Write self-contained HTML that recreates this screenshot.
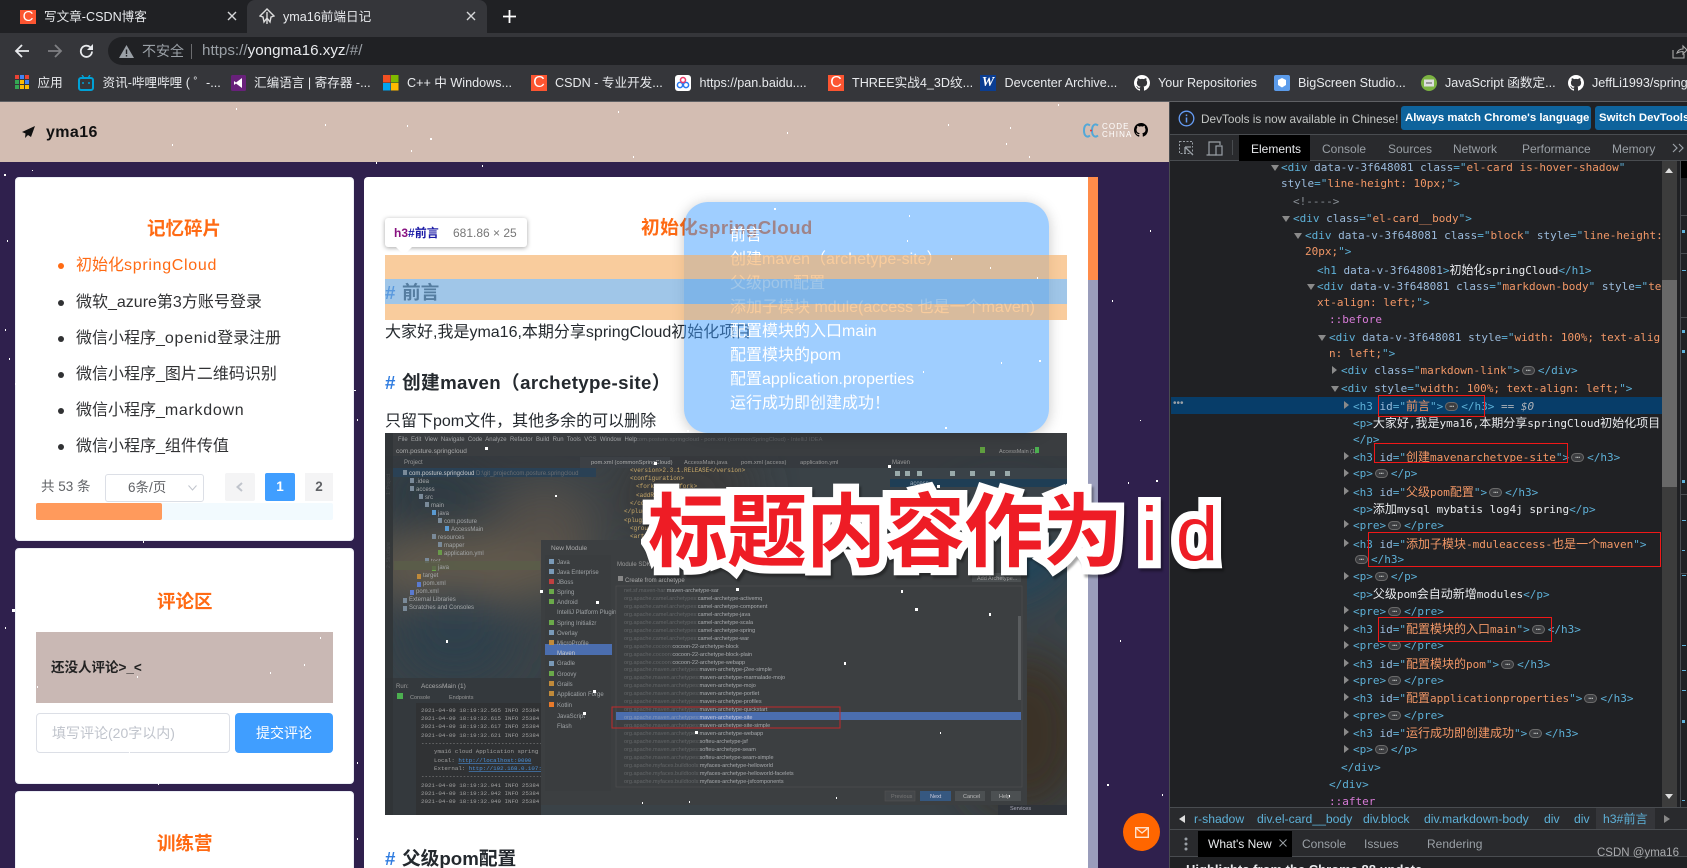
<!DOCTYPE html>
<html lang="zh"><head><meta charset="utf-8"><title>yma16前端日记</title>
<style>
*{box-sizing:border-box}
html,body{margin:0;padding:0;width:1687px;height:868px;overflow:hidden;background:#2f204d;font-family:"Liberation Sans","Noto Sans CJK SC",sans-serif}
#w{position:relative;width:1687px;height:868px;overflow:hidden;background:#2f204d}
.x{position:absolute;white-space:pre}
.bk{position:absolute;top:74px;font-size:12.6px;line-height:18px;color:#e8eaed;white-space:pre}
.bi{position:absolute;top:75px;width:16px;height:16px}
.li{position:absolute;left:76px;font-size:16px;line-height:22px;color:#303133;white-space:pre}
.li span{letter-spacing:.7px}
.dot{position:absolute;left:58px;width:6px;height:6px;border-radius:50%;background:#303133}
.card{position:absolute;left:15px;width:339px;background:#fff;border-radius:4px;border:1px solid #ebeef5}
.ttl{position:absolute;font-size:18.5px;line-height:24px;font-weight:700;color:#ff6a13;white-space:pre}
.toc{position:absolute;left:730px;font-size:16px;line-height:22px;color:#fff;white-space:pre}
.dt{position:absolute;font-size:12px;line-height:16px;color:#9aa0a6;white-space:pre}
.l{position:absolute;font:11px/16px "DejaVu Sans Mono","Noto Sans CJK SC",monospace;color:#5db0d7;white-space:pre}
.l i{font-style:normal;font-size:12px;font-family:"Noto Sans CJK SC",sans-serif}
.l u{text-decoration:none;color:#9bbbdc}
.l s{text-decoration:none;color:#f29766}
.l em{font-style:normal;color:#e8eaed}
.l b{font-weight:400;color:#d77bd7}
.l span{display:inline-block;width:13px;height:9px;border-radius:5px;background:#3c3d40;border:1px solid #6b6b6b;margin:0 3px 0 2px;vertical-align:-1px;font-size:8px;line-height:4px;text-align:center;color:#c4c7c5;overflow:hidden}
.tr{position:absolute;width:0;height:0;border-left:5px solid #8a8a8a;border-top:4px solid transparent;border-bottom:4px solid transparent}
.td{position:absolute;width:0;height:0;border-top:6px solid #8a8a8a;border-left:4px solid transparent;border-right:4px solid transparent}
.rb{position:absolute;border:1px solid #f01818}
.cr{position:absolute;font-size:12.2px;line-height:16px;color:#5db0d7;white-space:pre}
.big{position:absolute;left:648px;top:478px;font:700 80px/96px "Noto Sans CJK SC","Liberation Sans",sans-serif;color:#ee1c25;-webkit-text-stroke:16px #fff;paint-order:stroke fill;letter-spacing:-1px;white-space:pre;filter:drop-shadow(2px 3px 1px rgba(0,0,0,.35));stroke-linejoin:round}
.big span{font-family:"Liberation Sans",sans-serif;font-size:76px;letter-spacing:18px;font-weight:400;margin-left:19px}
</style></head><body><div id="w">

<!-- browser chrome -->
<div class="x" style="left:0;top:0;width:1687px;height:102px;background:#35363a"></div>
<div class="x" style="left:0;top:0;width:1687px;height:33px;background:#202124"></div>
<div class="x" style="left:247px;top:0;width:240px;height:37px;background:#35363a;border-radius:8px 8px 0 0"></div>
<div class="x" style="left:20px;top:10px;width:16px;height:14px;background:#fc5531;color:#fff;font-size:15px;line-height:14px;text-align:center">C</div>
<div class="x" style="left:44px;top:8px;font-size:12.6px;line-height:18px;color:#e8eaed">写文章-CSDN博客</div>
<svg class="x" style="left:227px;top:11px" width="10" height="10"><path d="M1 1l8 8M9 1l-8 8" stroke="#d5d6d8" stroke-width="1.4"/></svg>
<svg class="x" style="left:259px;top:8px" width="16" height="17" viewBox="0 0 16 17"><path d="M8 1L1 8l3 1 1 5 3-4 3 4 1-5 3-1zM8 4v12" fill="none" stroke="#ddd" stroke-width="1.4"/></svg>
<div class="x" style="left:283px;top:8px;font-size:12.6px;line-height:18px;color:#e8eaed">yma16前端日记</div>
<svg class="x" style="left:466px;top:11px" width="10" height="10"><path d="M1 1l8 8M9 1l-8 8" stroke="#d5d6d8" stroke-width="1.4"/></svg>
<svg class="x" style="left:503px;top:10px" width="13" height="13"><path d="M6.500 0v13M0 6.500h13" stroke="#fff" stroke-width="1.8"/></svg>
<!-- toolbar -->
<svg class="x" style="left:14px;top:44px" width="16" height="14"><path d="M15 7H2M8 1L2 7l6 6" fill="none" stroke="#e8eaed" stroke-width="1.8"/></svg>
<svg class="x" style="left:47px;top:44px" width="16" height="14"><path d="M1 7h13M8 1l6 6-6 6" fill="none" stroke="#7f8083" stroke-width="1.8"/></svg>
<svg class="x" style="left:79px;top:44px" width="15" height="15"><path d="M13 7.500A5.600 5.600 0 1 1 11 3" fill="none" stroke="#e8eaed" stroke-width="1.8"/><path d="M14 0v6H8z" fill="#e8eaed"/></svg>
<div class="x" style="left:108px;top:37px;width:1579px;height:28px;background:#202124;border-radius:14px 0 0 14px"></div>
<svg class="x" style="left:119px;top:45px" width="15" height="13"><path d="M7.500 0L15 13H0z" fill="#9aa0a6"/><path d="M7.500 4.500v4.500M7.500 10v1.500" stroke="#202124" stroke-width="1.4"/></svg>
<div class="x" style="left:142px;top:42px;font-size:14px;line-height:18px;color:#9aa0a6">不安全</div>
<div class="x" style="left:191px;top:44px;width:1px;height:15px;background:#6b6c6f"></div>
<div class="x" style="left:202px;top:42px;font-size:15.2px;line-height:18px;color:#9aa0a6">https://<span style="color:#e8eaed">yongma16.xyz</span>/#/</div>
<svg class="x" style="left:1672px;top:44px" width="15" height="15"><path d="M1 6v8h11v-4M5 9c1-3 3-4 6-4V2l4 4-4 4V7.500c-2 0-4 .5-6 1.500z" fill="none" stroke="#aaa" stroke-width="1.1"/></svg>
<!-- bookmarks -->
<svg class="x" style="left:15px;top:75px" width="15" height="15"><g><rect width="4" height="4" fill="#ea4335"/><rect x="5" width="4" height="4" fill="#4285f4"/><rect x="10" width="4" height="4" fill="#ea4335"/><rect y="5" width="4" height="4" fill="#34a853"/><rect x="5" y="5" width="4" height="4" fill="#fbbc04"/><rect x="10" y="5" width="4" height="4" fill="#4285f4"/><rect y="10" width="4" height="4" fill="#34a853"/><rect x="5" y="10" width="4" height="4" fill="#fbbc04"/><rect x="10" y="10" width="4" height="4" fill="#fbbc04"/></g></svg>
<div class="bk" style="left:37.500px">应用</div>
<svg class="bi" style="left:78px" viewBox="0 0 16 16"><path d="M4 0l2 3M12 0l-2 3" stroke="#00a1d6" stroke-width="1.400"/><rect x="1" y="3" width="14" height="12" rx="2" fill="none" stroke="#00a1d6" stroke-width="2"/><path d="M5 7v2M11 7v2" stroke="#00a1d6" stroke-width="1.500"/></svg>
<div class="bk" style="left:102.500px">资讯-哔哩哔哩 ( ゜-...</div>
<svg class="bi" style="left:231px" viewBox="0 0 16 16"><rect width="15" height="16" rx="1.500" fill="#68217a"/><path d="M11 3v10L5 8.500 3 10V6l2 1.500z" fill="#fff"/></svg>
<div class="bk" style="left:254px">汇编语言 | 寄存器 -...</div>
<svg class="bi" style="left:383px" viewBox="0 0 16 16"><rect width="7.500" height="7.500" fill="#f25022"/><rect x="8" width="7.500" height="7.500" fill="#7fba00"/><rect y="8" width="7.500" height="7.500" fill="#00a4ef"/><rect x="8" y="8" width="7.500" height="7.500" fill="#ffb900"/></svg>
<div class="bk" style="left:407px">C++ 中 Windows...</div>
<div class="x" style="left:531px;top:75px;width:16px;height:16px;background:#fc5531;color:#fff;font-size:16px;line-height:16px;text-align:center">C</div>
<div class="bk" style="left:555px">CSDN - 专业开发...</div>
<svg class="bi" style="left:675px" viewBox="0 0 16 16"><rect width="16" height="16" rx="3" fill="#fff"/><circle cx="5" cy="10" r="2.600" fill="none" stroke="#2878f0" stroke-width="1.500"/><circle cx="11" cy="10" r="2.600" fill="none" stroke="#2878f0" stroke-width="1.500"/><circle cx="8" cy="5" r="2.500" fill="none" stroke="#ee3a6a" stroke-width="1.500"/></svg>
<div class="bk" style="left:699.500px">https://pan.baidu....</div>
<div class="x" style="left:828px;top:75px;width:16px;height:16px;background:#fc5531;color:#fff;font-size:16px;line-height:16px;text-align:center">C</div>
<div class="bk" style="left:852px">THREE实战4_3D纹...</div>
<div class="x" style="left:980px;top:75px;width:16px;height:16px;background:#0a3d91;color:#fff;font:italic 700 14px/16px 'Liberation Serif',serif;text-align:center">W</div>
<div class="bk" style="left:1004.500px">Devcenter Archive...</div>
<svg class="bi" style="left:1134px" viewBox="0 0 16 16"><path fill="#fff" d="M8 0C3.580 0 0 3.580 0 8c0 3.540 2.290 6.530 5.470 7.590.4.070.55-.17.55-.38 0-.19-.01-.82-.01-1.490-2.010.37-2.530-.49-2.690-.94-.09-.23-.48-.94-.82-1.130-.28-.15-.68-.52-.01-.53.63-.01 1.080.58 1.230.82.72 1.210 1.870.87 2.330.66.070-.52.28-.87.51-1.070-1.780-.2-3.640-.89-3.640-3.950 0-.87.31-1.590.82-2.150-.08-.2-.36-1.020.08-2.120 0 0 .67-.21 2.200.82.64-.18 1.320-.27 2-.27s1.360.09 2 .27c1.530-1.040 2.200-.82 2.200-.82.44 1.100.16 1.920.08 2.120.51.56.82 1.270.82 2.150 0 3.070-1.870 3.750-3.650 3.950.29.25.54.73.54 1.480 0 1.070-.01 1.930-.01 2.200 0 .21.15.46.55.38A8.013 8.013 0 0016 8c0-4.420-3.580-8-8-8z"/></svg>
<div class="bk" style="left:1158px">Your Repositories</div>
<svg class="bi" style="left:1274px" viewBox="0 0 16 16"><rect width="16" height="16" rx="2" fill="#5b9bea"/><path d="M8 3l4 2v5l-4 2.500L4 10V5z" fill="#fff"/></svg>
<div class="bk" style="left:1298px">BigScreen Studio...</div>
<svg class="bi" style="left:1421px" viewBox="0 0 16 16"><circle cx="8" cy="8" r="8" fill="#7cb342"/><rect x="3" y="4.500" width="10" height="7" fill="#ddd"/><path d="M5 8h6" stroke="#555"/></svg>
<div class="bk" style="left:1445px">JavaScript 函数定...</div>
<svg class="bi" style="left:1568px" viewBox="0 0 16 16"><path fill="#fff" d="M8 0C3.580 0 0 3.580 0 8c0 3.540 2.290 6.530 5.470 7.590.4.070.55-.17.55-.38 0-.19-.01-.82-.01-1.490-2.010.37-2.530-.49-2.690-.94-.09-.23-.48-.94-.82-1.130-.28-.15-.68-.52-.01-.53.63-.01 1.080.58 1.230.82.72 1.210 1.870.87 2.330.66.070-.52.28-.87.51-1.070-1.780-.2-3.640-.89-3.640-3.950 0-.87.31-1.590.82-2.150-.08-.2-.36-1.020.08-2.120 0 0 .67-.21 2.200.82.64-.18 1.320-.27 2-.27s1.360.09 2 .27c1.530-1.040 2.200-.82 2.200-.82.44 1.100.16 1.920.08 2.120.51.56.82 1.270.82 2.150 0 3.070-1.870 3.750-3.650 3.950.29.25.54.73.54 1.480 0 1.070-.01 1.930-.01 2.200 0 .21.15.46.55.38A8.013 8.013 0 0016 8c0-4.420-3.580-8-8-8z"/></svg>
<div class="bk" style="left:1592px">JeffLi1993/spring</div>
<div class="x" style="left:0;top:101px;width:1687px;height:1px;background:#5f6064"></div>

<!-- page -->
<div class="x" style="left:0;top:102px;width:1170px;height:60px;background:#d3bdb2"></div>
<svg class="x" style="left:22px;top:126px" width="13" height="12" viewBox="0 0 13 12"><path d="M13 0L0 6l3.500 1.500L3 12l3-3 3 2z" fill="#111"/></svg>
<div class="x" style="left:46px;top:123px;font-size:16px;font-weight:700;line-height:20px;color:#111;letter-spacing:.4px">yma16</div>
<svg class="x" style="left:1083px;top:123px" width="16" height="15" viewBox="0 0 16 15"><path d="M7 2.500C4 0 1 2 1 7.500s3 7.500 6 5M15 2.500C12 0 9 2 9 7.500s3 7.500 6 5" fill="none" stroke="#52a8d8" stroke-width="2"/><circle cx="8" cy="7.500" r="1" fill="#e33"/></svg>
<div class="x" style="left:1102px;top:123px;font-size:8px;line-height:8px;color:#fff;letter-spacing:1.1px">CODE<br>CHINA</div>
<svg class="x" style="left:1134px;top:123px" width="14" height="14" viewBox="0 0 16 16"><path fill="#000" d="M8 0C3.580 0 0 3.580 0 8c0 3.540 2.290 6.530 5.470 7.590.4.070.55-.17.55-.38 0-.19-.01-.82-.01-1.490-2.010.37-2.530-.49-2.690-.94-.09-.23-.48-.94-.82-1.130-.28-.15-.68-.52-.01-.53.63-.01 1.080.58 1.230.82.72 1.210 1.870.87 2.330.66.070-.52.28-.87.51-1.070-1.780-.2-3.640-.89-3.640-3.950 0-.87.31-1.590.82-2.150-.08-.2-.36-1.020.08-2.120 0 0 .67-.21 2.200.82.64-.18 1.320-.27 2-.27s1.360.09 2 .27c1.530-1.040 2.200-.82 2.200-.82.44 1.100.16 1.920.08 2.120.51.56.82 1.270.82 2.150 0 3.070-1.870 3.750-3.650 3.950.29.25.54.73.54 1.480 0 1.070-.01 1.930-.01 2.200 0 .21.15.46.55.38A8.013 8.013 0 0016 8c0-4.420-3.580-8-8-8z"/></svg>

<!-- left cards -->
<div class="card" style="top:177px;height:364px"></div>
<div class="card" style="top:548px;height:236px"></div>
<div class="card" style="top:791px;height:90px"></div>
<div class="ttl" style="left:147px;top:217px">记忆碎片</div>
<div class="dot" style="top:263px;background:#ff6a13"></div><div class="li" style="top:255px;color:#ff6a13">初始化<span>springCloud</span></div>
<div class="dot" style="top:300px"></div><div class="li" style="top:292px">微软_azure第3方账号登录</div>
<div class="dot" style="top:336px"></div><div class="li" style="top:328px">微信小程序_<span>openid</span>登录注册</div>
<div class="dot" style="top:372px"></div><div class="li" style="top:364px">微信小程序_图片二维码识别</div>
<div class="dot" style="top:408px"></div><div class="li" style="top:400px">微信小程序_<span>markdown</span></div>
<div class="dot" style="top:444px"></div><div class="li" style="top:436px">微信小程序_组件传值</div>
<div class="x" style="left:41px;top:478px;font-size:13.5px;line-height:18px;color:#606266">共 53 条</div>
<div class="x" style="left:105px;top:474px;width:99px;height:28px;border:1px solid #dcdfe6;border-radius:3px;background:#fff"></div>
<div class="x" style="left:128px;top:479px;font-size:13.5px;line-height:18px;color:#606266">6条/页</div>
<svg class="x" style="left:188px;top:485px" width="9" height="6"><path d="M.5.500L4.500 5l4-4.500" fill="none" stroke="#c0c4cc"/></svg>
<div class="x" style="left:225px;top:473px;width:30px;height:28px;background:#f4f4f5;border-radius:2px"></div>
<svg class="x" style="left:236px;top:482px" width="7" height="10"><path d="M6 1L1.500 5 6 9" fill="none" stroke="#c0c4cc" stroke-width="2"/></svg>
<div class="x" style="left:265px;top:473px;width:30px;height:28px;background:#409eff;border-radius:2px;color:#fff;font-weight:700;font-size:13.500px;line-height:28px;text-align:center">1</div>
<div class="x" style="left:305px;top:473px;width:28px;height:28px;background:#f4f4f5;color:#606266;font-weight:700;font-size:13.500px;line-height:28px;text-align:center">2</div>
<div class="x" style="left:36px;top:503px;width:297px;height:17px;background:#f2fafe;border-radius:2px"></div>
<div class="x" style="left:36px;top:503px;width:126px;height:17px;background:#ff9a5c;border-radius:2px"></div>

<div class="ttl" style="left:157px;top:590px">评论区</div>
<div class="x" style="left:36px;top:632px;width:297px;height:71px;background:#c9b8b4"></div>
<div class="x" style="left:51px;top:659px;font-size:13.500px;font-weight:700;line-height:18px;color:#222">还没人评论&gt;_&lt;</div>
<div class="x" style="left:36px;top:713px;width:194px;height:40px;border:1px solid #dcdfe6;border-radius:4px;background:#fff"></div>
<div class="x" style="left:52px;top:724px;font-size:14px;line-height:18px;color:#c0c4cc">填写评论(20字以内)</div>
<div class="x" style="left:235px;top:713px;width:98px;height:40px;background:#409eff;border-radius:4px;color:#fff;font-size:14px;line-height:40px;text-align:center">提交评论</div>
<div class="ttl" style="left:157px;top:832px">训练营</div>

<!-- main card -->
<div class="x" style="left:364px;top:177px;width:724px;height:691px;background:#fff;border-radius:4px 0 0 0"></div>
<div class="x" style="left:1088px;top:177px;width:10px;height:691px;background:#9a9dbb"></div>
<div class="x" style="left:1088px;top:177px;width:10px;height:103px;background:#ff8c4a"></div>

<div class="x" style="left:641px;top:215px;font-size:18.7px;font-weight:700;line-height:26px;color:#ff6a13;letter-spacing:.4px">初始化springCloud</div>
<div class="x" style="left:385px;top:281px;font-size:18.7px;font-weight:700;line-height:24px;color:#2f7ce0">#</div>
<div class="x" style="left:402px;top:281px;font-size:18.7px;font-weight:700;line-height:24px;color:#24292e">前言</div>
<div class="x" style="left:385px;top:322px;font-size:16px;line-height:22px;color:#24292e">大家好,我是yma16,本期分享springCloud初始化项目</div>
<div class="x" style="left:385px;top:371px;font-size:18.7px;font-weight:700;line-height:24px;color:#2f7ce0">#</div>
<div class="x" style="left:402px;top:371px;font-size:18.7px;font-weight:700;line-height:24px;color:#24292e;letter-spacing:.35px">创建maven（archetype-site）</div>
<div class="x" style="left:385px;top:411px;font-size:16px;line-height:22px;color:#24292e">只留下pom文件，其他多余的可以删除</div>
<div class="x" style="left:385px;top:847px;font-size:18.7px;font-weight:700;line-height:24px;color:#2f7ce0">#</div>
<div class="x" style="left:402px;top:847px;font-size:18.7px;font-weight:700;line-height:24px;color:#24292e">父级pom配置</div>

<!-- IDE screenshot -->
<svg class="x" style="left:385px;top:433px;filter:blur(.35px)" width="682" height="382" viewBox="0 0 682 382" font-family="'Liberation Sans',sans-serif" font-size="6">
<defs><filter id="bl"><feGaussianBlur stdDeviation="22"/></filter><clipPath id="cp"><rect width="682" height="382"/></clipPath></defs>
<g clip-path="url(#cp)">
<rect width="682" height="382" fill="#3a4247"/>
<g filter="url(#bl)">
<ellipse cx="90" cy="135" rx="120" ry="28" fill="#6b5e4e"/>
<ellipse cx="70" cy="200" rx="60" ry="50" fill="#2f3f4b"/>
<ellipse cx="160" cy="90" rx="50" ry="40" fill="#55504a"/>
<ellipse cx="50" cy="60" rx="60" ry="40" fill="#2f3a42"/>
<ellipse cx="300" cy="60" rx="70" ry="60" fill="#3a3a3a"/>
<ellipse cx="640" cy="300" rx="60" ry="80" fill="#3b3328"/>
<ellipse cx="620" cy="110" rx="70" ry="60" fill="#24455a"/>
</g>
<rect width="682" height="23" fill="#3a3d40"/>
<text y="8" x="13" fill="#a0a2a4" font-size="6" xml:space="preserve">File  Edit  View  Navigate  Code  Analyze  Refactor  Build  Run  Tools  VCS  Window  Help</text>
<text y="8" x="251" fill="#5e6164" font-size="5.800">com.posture.springcloud - pom.xml (commonSpringCloud) - IntelliJ IDEA</text>
<text y="20" x="11" fill="#aaa" font-size="6.500">com.posture.springcloud</text>
<text y="20" x="614" fill="#999" font-size="5.500">AccessMain (1)</text>
<rect x="650" y="14" width="4" height="6" fill="#4caf50"/><rect x="595" y="14" width="5" height="6" fill="#5f9e3f"/>
<rect y="23" width="682" height="12" fill="#34383c" opacity=".7"/>
<text y="31" x="19" fill="#999">Project</text>
<rect x="195" y="24" width="90" height="11" fill="#3c4045"/>
<text y="31" x="206" fill="#aaa" font-size="5.800">pom.xml (commonSpringCloud)</text>
<text y="31" x="299" fill="#999" font-size="5.800">AccessMain.java</text>
<text y="31" x="356" fill="#999" font-size="5.800">pom.xml (access)</text>
<text y="31" x="415" fill="#999" font-size="5.800">application.yml</text>
<text y="31" x="507" fill="#999">Maven</text>
<rect x="8" y="35" width="203" height="9" fill="#2a4155"/>
<g transform="translate(5,62) rotate(-90)" fill="#999" font-size="5"><text x="0" y="0">1: Project</text></g>
<g transform="translate(5,135) rotate(-90)" fill="#999" font-size="5"><text x="0" y="0">2: Structure</text></g>
<g fill="#7a8a99">
<rect x="18" y="37" width="4" height="5"/><rect x="25" y="45" width="4" height="5"/><rect x="25" y="53" width="4" height="5"/><rect x="34" y="61" width="4" height="5"/><rect x="40" y="69" width="4" height="5"/><rect x="47" y="77" width="4" height="5" fill="#5a9ad0"/><rect x="53" y="85" width="4" height="5"/><rect x="60" y="93" width="4" height="5" fill="#5a9ad0"/><rect x="47" y="101" width="4" height="5"/><rect x="53" y="109" width="4" height="5"/><rect x="53" y="117" width="4" height="5" fill="#6a9a4a"/><rect x="40" y="125" width="4" height="5"/><rect x="47" y="133" width="4" height="5" fill="#6aaa4a"/><rect x="32" y="141" width="4" height="5" fill="#c08a3a"/><rect x="32" y="149" width="4" height="5" fill="#5a7ad0"/><rect x="25" y="157" width="4" height="5" fill="#5a7ad0"/><rect x="18" y="165" width="4" height="5"/><rect x="18" y="173" width="4" height="5"/>
</g>
<g fill="#a4a7a9" font-size="6">
<text x="24" y="42" fill="#ccc">com.posture.springcloud <tspan fill="#6a6d70">D:\git_project\com.posture.springcloud</tspan></text>
<text x="31" y="50">.idea</text><text x="31" y="58">access</text><text x="40" y="66">src</text><text x="46" y="74">main</text><text x="53" y="82">java</text><text x="59" y="90">com.posture</text><text x="66" y="98">AccessMain</text><text x="53" y="106">resources</text><text x="59" y="114">mapper</text><text x="59" y="122">application.yml</text><text x="46" y="130">test</text>
<rect x="9" y="128" width="146" height="9" fill="#5a5e49" opacity=".8"/><text x="53" y="136">java</text>
<text x="38" y="144">target</text><text x="38" y="152">pom.xml</text><text x="31" y="160">pom.xml</text><text x="24" y="168">External Libraries</text><text x="24" y="176">Scratches and Consoles</text>
</g>
<g font-size="6" fill="#c8a868" font-family="'Liberation Mono',monospace">
<text x="245" y="39">&lt;version&gt;2.3.1.RELEASE&lt;/version&gt;</text><text x="245" y="47">&lt;configuration&gt;</text><text x="251" y="55">&lt;fork&gt;true&lt;/fork&gt;</text><text x="251" y="64">&lt;addResources&gt;</text><text x="245" y="72">&lt;/configuration&gt;</text><text x="239" y="80">&lt;/plugin&gt;</text><text x="239" y="89">&lt;plugin&gt;</text><text x="245" y="97">&lt;groupId&gt;</text><text x="245" y="105">&lt;artifactId&gt;</text>
</g>
<rect x="505" y="35" width="177" height="72" fill="#3a4248"/>
<rect x="505" y="46" width="177" height="8" fill="#1f3e55"/>
<text x="525" y="52" fill="#9ab">access</text><text x="525" y="61" fill="#9ab">Lifecycle</text>
<g fill="#9aa"><rect x="510" y="38" width="5" height="5"/><rect x="520" y="38" width="5" height="5"/><rect x="532" y="38" width="5" height="5"/><rect x="565" y="38" width="5" height="5"/><rect x="585" y="38" width="5" height="5"/><rect x="605" y="38" width="5" height="5"/><rect x="620" y="38" width="5" height="5"/></g>
<!-- run panel -->
<rect y="245" width="156" height="137" fill="#34393d"/>
<rect x="0" y="0" width="8" height="382" fill="#2f3336" opacity=".8"/>
<rect x="31" y="270" width="125" height="112" fill="#303234"/>
<text x="11" y="255" fill="#999">Run:</text><text x="36" y="255" fill="#aaa" font-size="6.500">AccessMain (1)</text>
<text x="25" y="266" fill="#999" font-size="5.500">Console</text><text x="64" y="266" fill="#999" font-size="5.500">Endpoints</text>
<rect x="12" y="260" width="6" height="6" fill="#4caf50"/>
<g font-family="'Liberation Mono',monospace" font-size="5.800" fill="#a0a0a0" xml:space="preserve">
<text x="36" y="279">2021-04-09 18:19:32.565  INFO 25384 ---</text>
<text x="36" y="287">2021-04-09 18:19:32.615  INFO 25384 ---</text>
<text x="36" y="295">2021-04-09 18:19:32.617  INFO 25384 ---</text>
<text x="36" y="304">2021-04-09 18:19:32.621  INFO 25384 ---</text>
<text x="36" y="312">--------------------------------------</text>
<text x="49" y="320">yma16 cloud Application spring clo</text>
<text x="49" y="329">Local:    <tspan fill="#4a90d9" text-decoration="underline">http://localhost:9090</tspan></text>
<text x="49" y="337">External: <tspan fill="#4a90d9" text-decoration="underline">http://192.168.0.107:</tspan></text>
<text x="36" y="345">--------------------------------------</text>
<text x="36" y="354">2021-04-09 18:19:32.941  INFO 25384 ---</text>
<text x="36" y="362">2021-04-09 18:19:32.942  INFO 25384 ---</text>
<text x="36" y="370">2021-04-09 18:19:32.949  INFO 25384 ---</text>
</g>
<!-- dialog -->
<rect x="156" y="107" width="486" height="265" fill="#3c3f41"/>
<text x="166" y="117" fill="#aaa" font-size="6.500">New Module</text>
<rect x="160" y="122" width="66" height="236" fill="#3a3d3f"/>
<rect x="160" y="211" width="67" height="11" fill="#4b6eaf"/>
<g fill="#9fa3a6" font-size="6">
<text x="172" y="131">Java</text><text x="172" y="141">Java Enterprise</text><text x="172" y="151">JBoss</text><text x="172" y="161">Spring</text><text x="172" y="171">Android</text><text x="172" y="181">IntelliJ Platform Plugin</text><text x="172" y="192">Spring Initializr</text><text x="172" y="202">Overlay</text><text x="172" y="212">MicroProfile</text><text x="172" y="222" fill="#ccc">Maven</text><text x="172" y="232">Gradle</text><text x="172" y="243">Groovy</text><text x="172" y="253">Grails</text><text x="172" y="263">Application Forge</text><text x="172" y="274">Kotlin</text><text x="172" y="285">JavaScript</text><text x="172" y="295">Flash</text>
</g>
<g fill="#7a9ab8"><rect x="164" y="126" width="5" height="5"/><rect x="164" y="136" width="5" height="5"/><rect x="164" y="146" width="5" height="5" fill="#c04040"/><rect x="164" y="156" width="5" height="5" fill="#6aaa4a"/><rect x="164" y="166" width="5" height="5" fill="#6aaa4a"/><rect x="164" y="187" width="5" height="5" fill="#6aaa4a"/><rect x="164" y="197" width="5" height="5"/><rect x="164" y="207" width="5" height="5" fill="#c08a3a"/><rect x="164" y="228" width="5" height="5"/><rect x="164" y="238" width="5" height="5" fill="#6aaa4a"/><rect x="164" y="248" width="5" height="5" fill="#c08a3a"/><rect x="164" y="258" width="5" height="5" fill="#c08a3a"/><rect x="164" y="269" width="5" height="5" fill="#e87a2a"/></g>
<text x="232" y="133" fill="#999">Module SDK:</text>
<rect x="233" y="143" width="5" height="5" fill="#888"/><text x="240" y="149" fill="#aaa">Create from archetype</text>
<rect x="587" y="140" width="49" height="9" fill="#4c5052"/><text x="592" y="147" fill="#aaa" font-size="5.500">Add Archetype...</text>
<rect x="231" y="153" width="406" height="201" fill="#3c3f41" stroke="#555" stroke-width=".5"/>
<rect x="231" y="279" width="405" height="8" fill="#4b6eaf"/>
<g font-size="5.500" fill="#a8abae">
<text x="239" y="159"><tspan fill="#646769">net.sf.maven-har:</tspan>maven-archetype-sar</text>
<text x="239" y="167"><tspan fill="#646769">org.apache.camel.archetypes:</tspan>camel-archetype-activemq</text>
<text x="239" y="175"><tspan fill="#646769">org.apache.camel.archetypes:</tspan>camel-archetype-component</text>
<text x="239" y="183"><tspan fill="#646769">org.apache.camel.archetypes:</tspan>camel-archetype-java</text>
<text x="239" y="191"><tspan fill="#646769">org.apache.camel.archetypes:</tspan>camel-archetype-scala</text>
<text x="239" y="199"><tspan fill="#646769">org.apache.camel.archetypes:</tspan>camel-archetype-spring</text>
<text x="239" y="207"><tspan fill="#646769">org.apache.camel.archetypes:</tspan>camel-archetype-war</text>
<text x="239" y="215"><tspan fill="#646769">org.apache.cocoon:</tspan>cocoon-22-archetype-block</text>
<text x="239" y="223"><tspan fill="#646769">org.apache.cocoon:</tspan>cocoon-22-archetype-block-plain</text>
<text x="239" y="231"><tspan fill="#646769">org.apache.cocoon:</tspan>cocoon-22-archetype-webapp</text>
<text x="239" y="238"><tspan fill="#646769">org.apache.maven.archetypes:</tspan>maven-archetype-j2ee-simple</text>
<text x="239" y="246"><tspan fill="#646769">org.apache.maven.archetypes:</tspan>maven-archetype-marmalade-mojo</text>
<text x="239" y="254"><tspan fill="#646769">org.apache.maven.archetypes:</tspan>maven-archetype-mojo</text>
<text x="239" y="262"><tspan fill="#646769">org.apache.maven.archetypes:</tspan>maven-archetype-portlet</text>
<text x="239" y="270"><tspan fill="#646769">org.apache.maven.archetypes:</tspan>maven-archetype-profiles</text>
<text x="239" y="278"><tspan fill="#646769">org.apache.maven.archetypes:</tspan>maven-archetype-quickstart</text>
<text x="239" y="286" fill="#ccd"><tspan fill="#8a9ab8">org.apache.maven.archetypes:</tspan>maven-archetype-site</text>
<text x="239" y="294"><tspan fill="#646769">org.apache.maven.archetypes:</tspan>maven-archetype-site-simple</text>
<text x="239" y="302"><tspan fill="#646769">org.apache.maven.archetypes:</tspan>maven-archetype-webapp</text>
<text x="239" y="310"><tspan fill="#646769">org.apache.maven.archetypes:</tspan>softeu-archetype-jsf</text>
<text x="239" y="318"><tspan fill="#646769">org.apache.maven.archetypes:</tspan>softeu-archetype-seam</text>
<text x="239" y="326"><tspan fill="#646769">org.apache.maven.archetypes:</tspan>softeu-archetype-seam-simple</text>
<text x="239" y="334"><tspan fill="#646769">org.apache.myfaces.buildtools:</tspan>myfaces-archetype-helloworld</text>
<text x="239" y="342"><tspan fill="#646769">org.apache.myfaces.buildtools:</tspan>myfaces-archetype-helloworld-facelets</text>
<text x="239" y="350"><tspan fill="#646769">org.apache.myfaces.buildtools:</tspan>myfaces-archetype-jsfcomponents</text>
</g>
<rect x="633" y="183" width="3" height="84" fill="#5a5d5f"/>
<rect x="227" y="274" width="228" height="21" fill="none" stroke="#c22a2a" stroke-width="1"/>
<rect x="500" y="358" width="30" height="10" fill="#44474a" stroke="#555" stroke-width=".5"/><text x="506" y="365" fill="#777" font-size="5.500">Previous</text>
<rect x="535" y="358" width="31" height="10" fill="#365880"/><text x="545" y="365" fill="#ccd" font-size="5.500">Next</text>
<rect x="570" y="358" width="30" height="10" fill="#4c5052"/><text x="578" y="365" fill="#bbb" font-size="5.500">Cancel</text>
<rect x="606" y="358" width="30" height="10" fill="#4c5052"/><text x="614" y="365" fill="#bbb" font-size="5.500">Help</text>
<rect x="613" y="372" width="69" height="10" fill="#30343a"/><text x="625" y="377" fill="#aab" font-size="5.500">Services</text>
</g></svg>

<!-- floating toc -->
<div class="x" style="left:684px;top:202px;width:365px;height:231px;background:rgba(64,158,255,.5);border-radius:24px;box-shadow:0 2px 14px rgba(0,0,0,.22)"></div>
<div class="toc" style="top:225px">前言</div>
<div class="toc" style="top:249px">创建maven（archetype-site）</div>
<div class="toc" style="top:273px">父级pom配置</div>
<div class="toc" style="top:297px">添加子模块 mdule(access 也是一个maven)</div>
<div class="toc" style="top:321px">配置模块的入口main</div>
<div class="toc" style="top:345px">配置模块的pom</div>
<div class="toc" style="top:369px">配置application.properties</div>
<div class="toc" style="top:393px">运行成功即创建成功！</div>

<!-- inspect overlay -->
<div class="x" style="left:385px;top:255px;width:682px;height:24px;background:rgba(246,178,107,.66)"></div>
<div class="x" style="left:385px;top:279px;width:682px;height:25px;background:rgba(111,168,220,.66)"></div>
<div class="x" style="left:385px;top:304px;width:682px;height:16px;background:rgba(246,178,107,.66)"></div>
<div class="x" style="left:385px;top:218px;width:142px;height:29px;background:#fff;border-radius:3px;box-shadow:0 1px 5px rgba(0,0,0,.35)"></div>
<svg class="x" style="left:396px;top:247px" width="16" height="9"><path d="M0 0h16L8 8z" fill="#fff"/></svg>
<div class="x" style="left:394px;top:225px;font-size:12px;font-weight:700;line-height:16px;color:#881280">h3<span style="color:#1a1aa6">#前言</span></div>
<div class="x" style="left:453px;top:225px;font-size:12px;line-height:16px;color:#777">681.86 × 25</div>

<!-- fab -->
<div class="x" style="left:1123px;top:813px;width:37px;height:38px;background:#ff6600;border-radius:50%"></div>
<svg class="x" style="left:1135px;top:827px" width="14" height="11"><rect x=".7" y=".7" width="12.600" height="9.600" fill="none" stroke="#ffe2cc" stroke-width="1.400"/><path d="M1.500 1.500L7 6l5.500-4.500" fill="none" stroke="#ffe2cc" stroke-width="1.400"/></svg>

<!-- stars -->
<svg class="x" style="left:0;top:0" width="1170" height="868" fill="#fff">
<rect x="4" y="174" width="2" height="2"/><rect x="32" y="170" width="1" height="1"/><rect x="7" y="240" width="1" height="2"/><rect x="5" y="329" width="1" height="2"/><rect x="9" y="358" width="1" height="2"/><rect x="15" y="383" width="1" height="2"/><rect x="354" y="390" width="2" height="1"/><rect x="357" y="419" width="1" height="2"/><rect x="12" y="609" width="3" height="3"/><rect x="5" y="627" width="1" height="2"/><rect x="143" y="541" width="1" height="2"/><rect x="320" y="637" width="1" height="2"/><rect x="304" y="664" width="1" height="2"/><rect x="270" y="672" width="1" height="2"/><rect x="137" y="676" width="1" height="2"/><rect x="37" y="686" width="1" height="2"/><rect x="129" y="751" width="1" height="2"/><rect x="357" y="762" width="1" height="2"/><rect x="158" y="783" width="1" height="2"/><rect x="357" y="838" width="1" height="2"/>
<rect x="236" y="108" width="1" height="2"/><rect x="325" y="124" width="1" height="2"/><rect x="407" y="125" width="1" height="2"/><rect x="430" y="138" width="2" height="2"/><rect x="411" y="150" width="1" height="2"/><rect x="172" y="144" width="1" height="2"/><rect x="376" y="162" width="1" height="2"/><rect x="482" y="165" width="1" height="2"/><rect x="618" y="111" width="1" height="2"/><rect x="1058" y="104" width="1" height="2"/><rect x="948" y="124" width="1" height="2"/><rect x="1010" y="127" width="1" height="2"/><rect x="787" y="132" width="1" height="2"/><rect x="1006" y="143" width="1" height="2"/><rect x="633" y="156" width="1" height="2"/><rect x="1029" y="156" width="1" height="2"/>
<rect x="774" y="208" width="2" height="2"/><rect x="909" y="215" width="1" height="2"/><rect x="907" y="240" width="1" height="2"/><rect x="1037" y="277" width="1" height="2"/><rect x="951" y="258" width="1" height="2"/><rect x="990" y="267" width="1" height="2"/><rect x="1039" y="360" width="2" height="2"/><rect x="1001" y="362" width="1" height="2"/><rect x="923" y="371" width="1" height="2"/><rect x="945" y="427" width="2" height="2"/><rect x="687" y="430" width="2" height="2"/>
<rect x="485" y="447" width="3" height="3"/><rect x="654" y="462" width="3" height="3"/><rect x="555" y="495" width="2" height="2"/><rect x="446" y="640" width="2" height="3"/><rect x="888" y="465" width="3" height="3"/><rect x="915" y="608" width="3" height="3"/><rect x="989" y="613" width="2" height="3"/><rect x="844" y="662" width="2" height="3"/><rect x="736" y="588" width="3" height="3"/><rect x="901" y="590" width="2" height="3"/><rect x="596" y="601" width="3" height="3"/><rect x="540" y="590" width="3" height="3"/><rect x="695" y="731" width="3" height="3"/><rect x="940" y="732" width="1" height="2"/><rect x="583" y="712" width="3" height="3"/><rect x="593" y="690" width="3" height="3"/><rect x="1009" y="795" width="1" height="2"/><rect x="836" y="797" width="1" height="2"/><rect x="689" y="801" width="1" height="2"/><rect x="642" y="802" width="1" height="2"/><rect x="937" y="485" width="3" height="3"/>
<rect x="1107" y="784" width="2" height="2"/><rect x="1162" y="794" width="1" height="2"/><rect x="1128" y="482" width="1" height="2"/><rect x="1156" y="480" width="2" height="2"/><rect x="1112" y="300" width="1" height="2"/><rect x="1140" y="420" width="1" height="1"/><rect x="1120" y="640" width="1" height="2"/><rect x="1150" y="230" width="1" height="2"/>
</svg>

<!-- devtools -->
<div class="x" style="left:1169px;top:102px;width:518px;height:766px;background:#202124"></div>
<div class="x" style="left:1169px;top:102px;width:1px;height:766px;background:#494c50"></div>
<svg class="x" style="left:1178px;top:110px" width="17" height="17"><circle cx="8.500" cy="8.500" r="7.300" fill="none" stroke="#669df6" stroke-width="1.300"/><path d="M8.500 7.500v5M8.500 4.500v1.600" stroke="#669df6" stroke-width="1.500"/></svg>
<div class="x" style="left:1201px;top:111px;font-size:11.800px;line-height:16px;color:#c4c7c5">DevTools is now available in Chinese!</div>
<div class="x" style="left:1401px;top:106px;width:190px;height:24px;background:#0e639c;border-radius:3px;color:#fff;font-size:11.400px;font-weight:700;line-height:24px;padding-left:4px;white-space:nowrap;overflow:hidden">Always match Chrome's language</div>
<div class="x" style="left:1595px;top:106px;width:92px;height:24px;background:#0e639c;border-radius:3px 0 0 3px;color:#fff;font-size:11.400px;font-weight:700;line-height:24px;padding-left:4px;overflow:hidden">Switch DevTools to Chinese</div>
<div class="x" style="left:1170px;top:134px;width:517px;height:27px;background:#292a2d;border-top:1px solid #494c50;border-bottom:1px solid #494c50"></div>
<svg class="x" style="left:1179px;top:141px" width="16" height="15"><rect x=".5" y=".5" width="13" height="12" fill="none" stroke="#9aa0a6" stroke-dasharray="2 1.500"/><path d="M5 6l9 0-3 3 4 5-2 1-4-5-2 2z" fill="#292a2d"/><path d="M6 6v6M6 6h6M6 6l8 8" stroke="#9aa0a6" stroke-width="1.300" fill="none"/></svg>
<svg class="x" style="left:1206px;top:141px" width="17" height="15"><path d="M.5 14h10M3 14V1h11v3" fill="none" stroke="#9aa0a6" stroke-width="1.200"/><rect x="10" y="5" width="6" height="9" fill="none" stroke="#9aa0a6" stroke-width="1.200"/></svg>
<div class="x" style="left:1232px;top:140px;width:1px;height:15px;background:#494c50"></div>
<div class="x" style="left:1239px;top:135px;width:71px;height:26px;background:#000"></div>
<div class="dt" style="left:1251px;top:141px;color:#e8eaed">Elements</div>
<div class="dt" style="left:1322px;top:141px">Console</div>
<div class="dt" style="left:1388px;top:141px">Sources</div>
<div class="dt" style="left:1453px;top:141px">Network</div>
<div class="dt" style="left:1522px;top:141px">Performance</div>
<div class="dt" style="left:1612px;top:141px">Memory</div>
<svg class="x" style="left:1672px;top:143px" width="12" height="10"><path d="M1 1l4 4-4 4M7 1l4 4-4 4" fill="none" stroke="#9aa0a6" stroke-width="1.200"/></svg>

<div class="x" style="left:1171px;top:397px;width:491px;height:17px;background:#073d69"></div>
<div class="x" style="left:1173px;top:399px;font-size:10px;line-height:10px;color:#9aa0a6">•••</div>

<div class="td" style="left:1271px;top:165px"></div>
<div class="l" style="left:1281px;top:160px">&lt;div <u>data-v-3f648081</u> <u>class</u>="<s>el-card is-hover-shadow</s>"</div>
<div class="l" style="left:1281px;top:176px"><u>style</u>="<s>line-height: 10px;</s>"&gt;</div>
<div class="l" style="left:1293px;top:194px;color:#898f96">&lt;!----&gt;</div>
<div class="td" style="left:1282px;top:216px"></div>
<div class="l" style="left:1293px;top:211px">&lt;div <u>class</u>="<s>el-card__body</s>"&gt;</div>
<div class="td" style="left:1294px;top:233px"></div>
<div class="l" style="left:1305px;top:228px">&lt;div <u>data-v-3f648081</u> <u>class</u>="<s>block</s>" <u>style</u>="<s>line-height:</s></div>
<div class="l" style="left:1305px;top:244px"><s>20px;</s>"&gt;</div>
<div class="l" style="left:1317px;top:262px">&lt;h1 <u>data-v-3f648081</u>&gt;<em><i>初始化</i>springCloud</em>&lt;/h1&gt;</div>
<div class="td" style="left:1307px;top:284px"></div>
<div class="l" style="left:1317px;top:279px">&lt;div <u>data-v-3f648081</u> <u>class</u>="<s>markdown-body</s>" <u>style</u>="<s>te</s></div>
<div class="l" style="left:1317px;top:295px"><s>xt-align: left;</s>"&gt;</div>
<div class="l" style="left:1329px;top:312px"><b>::before</b></div>
<div class="td" style="left:1318px;top:335px"></div>
<div class="l" style="left:1329px;top:330px">&lt;div <u>data-v-3f648081</u> <u>style</u>="<s>width: 100%; text-alig</s></div>
<div class="l" style="left:1329px;top:346px"><s>n: left;</s>"&gt;</div>
<div class="tr" style="left:1332px;top:366px"></div>
<div class="l" style="left:1341px;top:363px">&lt;div <u>class</u>="<s>markdown-link</s>"&gt;<span>…</span>&lt;/div&gt;</div>
<div class="td" style="left:1331px;top:386px"></div>
<div class="l" style="left:1341px;top:381px">&lt;div <u>style</u>="<s>width: 100%; text-align: left;</s>"&gt;</div>
<div class="tr" style="left:1344px;top:401px"></div>
<div class="l" style="left:1353px;top:398px">&lt;h3 <u>id</u>="<s><i>前言</i></s>"&gt;<span>…</span>&lt;/h3&gt; <em style="color:#b0b3b8">== <i style="font-family:'DejaVu Sans Mono',monospace;font-size:11px;font-style:italic">$0</i></em></div>
<div class="l" style="left:1353px;top:415px">&lt;p&gt;<em><i>大家好</i>,<i>我是</i>yma16,<i>本期分享</i>springCloud<i>初始化项目</i></em></div>
<div class="l" style="left:1353px;top:432px">&lt;/p&gt;</div>
<div class="tr" style="left:1344px;top:452px"></div>
<div class="l" style="left:1353px;top:449px">&lt;h3 <u>id</u>="<s><i>创建</i>mavenarchetype-site</s>"&gt;<span>…</span>&lt;/h3&gt;</div>
<div class="tr" style="left:1344px;top:469px"></div>
<div class="l" style="left:1353px;top:466px">&lt;p&gt;<span>…</span>&lt;/p&gt;</div>
<div class="tr" style="left:1344px;top:487px"></div>
<div class="l" style="left:1353px;top:484px">&lt;h3 <u>id</u>="<s><i>父级</i>pom<i>配置</i></s>"&gt;<span>…</span>&lt;/h3&gt;</div>
<div class="l" style="left:1353px;top:501px">&lt;p&gt;<em><i>添加</i>mysql mybatis log4j spring</em>&lt;/p&gt;</div>
<div class="tr" style="left:1344px;top:520px"></div>
<div class="l" style="left:1353px;top:518px">&lt;pre&gt;<span>…</span>&lt;/pre&gt;</div>
<div class="tr" style="left:1344px;top:539px"></div>
<div class="l" style="left:1353px;top:536px">&lt;h3 <u>id</u>="<s><i>添加子模块</i>-mduleaccess-<i>也是一个</i>maven</s>"&gt;</div>
<div class="l" style="left:1353px;top:552px"><span>…</span>&lt;/h3&gt;</div>
<div class="tr" style="left:1344px;top:572px"></div>
<div class="l" style="left:1353px;top:569px">&lt;p&gt;<span>…</span>&lt;/p&gt;</div>
<div class="l" style="left:1353px;top:586px">&lt;p&gt;<em><i>父级</i>pom<i>会自动新增</i>modules</em>&lt;/p&gt;</div>
<div class="tr" style="left:1344px;top:606px"></div>
<div class="l" style="left:1353px;top:604px">&lt;pre&gt;<span>…</span>&lt;/pre&gt;</div>
<div class="tr" style="left:1344px;top:624px"></div>
<div class="l" style="left:1353px;top:621px">&lt;h3 <u>id</u>="<s><i>配置模块的入口</i>main</s>"&gt;<span>…</span>&lt;/h3&gt;</div>
<div class="tr" style="left:1344px;top:641px"></div>
<div class="l" style="left:1353px;top:638px">&lt;pre&gt;<span>…</span>&lt;/pre&gt;</div>
<div class="tr" style="left:1344px;top:659px"></div>
<div class="l" style="left:1353px;top:656px">&lt;h3 <u>id</u>="<s><i>配置模块的</i>pom</s>"&gt;<span>…</span>&lt;/h3&gt;</div>
<div class="tr" style="left:1344px;top:676px"></div>
<div class="l" style="left:1353px;top:673px">&lt;pre&gt;<span>…</span>&lt;/pre&gt;</div>
<div class="tr" style="left:1344px;top:693px"></div>
<div class="l" style="left:1353px;top:690px">&lt;h3 <u>id</u>="<s><i>配置</i>applicationproperties</s>"&gt;<span>…</span>&lt;/h3&gt;</div>
<div class="tr" style="left:1344px;top:711px"></div>
<div class="l" style="left:1353px;top:708px">&lt;pre&gt;<span>…</span>&lt;/pre&gt;</div>
<div class="tr" style="left:1344px;top:728px"></div>
<div class="l" style="left:1353px;top:725px">&lt;h3 <u>id</u>="<s><i>运行成功即创建成功</i></s>"&gt;<span>…</span>&lt;/h3&gt;</div>
<div class="tr" style="left:1344px;top:745px"></div>
<div class="l" style="left:1353px;top:742px">&lt;p&gt;<span>…</span>&lt;/p&gt;</div>
<div class="l" style="left:1341px;top:760px">&lt;/div&gt;</div>
<div class="l" style="left:1329px;top:777px">&lt;/div&gt;</div>
<div class="l" style="left:1329px;top:794px"><b>::after</b></div>

<div class="rb" style="left:1378px;top:395px;width:107px;height:22px"></div>
<div class="rb" style="left:1374px;top:443px;width:194px;height:20px"></div>
<div class="rb" style="left:1368px;top:532px;width:293px;height:35px"></div>
<div class="rb" style="left:1378px;top:617px;width:174px;height:25px"></div>

<!-- scrollbar + styles sliver -->
<div class="x" style="left:1662px;top:161px;width:15px;height:646px;background:#3c3c3c"></div>
<div class="x" style="left:1662px;top:280px;width:15px;height:207px;background:#686868"></div>
<svg class="x" style="left:1665px;top:168px" width="9" height="6"><path d="M0 5h8L4 0z" fill="#ddd"/></svg>
<svg class="x" style="left:1665px;top:794px" width="9" height="6"><path d="M0 0h8L4 5z" fill="#ddd"/></svg>
<div class="x" style="left:1680px;top:161px;width:1px;height:646px;background:#494c50"></div>
<div class="x" style="left:1681px;top:161px;width:6px;height:17px;background:#000"></div>
<div class="x" style="left:1681px;top:215px;width:6px;height:1px;background:#494c50"></div>
<div class="x" style="left:1681px;top:253px;width:6px;height:1px;background:#494c50"></div>
<div class="x" style="left:1681px;top:317px;width:6px;height:1px;background:#494c50"></div>
<div class="x" style="left:1681px;top:494px;width:6px;height:1px;background:#494c50"></div>
<div class="x" style="left:1681px;top:573px;width:6px;height:1px;background:#494c50"></div>
<svg class="x" style="left:1682px;top:230px" width="5" height="590" fill="#5db0d7"><rect y="0" width="3" height="3"/><rect y="40" width="4" height="1"/><rect y="100" width="3" height="3"/><rect y="120" width="3" height="3"/><rect y="250" width="3" height="3"/><rect y="290" width="4" height="1"/><rect y="320" width="3" height="1"/><rect y="345" width="4" height="1"/><rect y="415" width="4" height="1"/><rect y="440" width="4" height="1"/><rect y="460" width="4" height="1"/><rect y="490" width="3" height="3"/><rect y="570" width="3" height="1"/></svg>

<!-- breadcrumbs -->
<div class="x" style="left:1170px;top:807px;width:517px;height:23px;background:#292a2d;border-top:1px solid #494c50;border-bottom:1px solid #494c50"></div>
<div class="x" style="left:1596px;top:808px;width:59px;height:21px;background:#35363a"></div>
<svg class="x" style="left:1179px;top:815px" width="6" height="8"><path d="M6 0v8L0 4z" fill="#ddd"/></svg>
<svg class="x" style="left:1664px;top:815px" width="6" height="8"><path d="M0 0v8l6-4z" fill="#888"/></svg>
<div class="cr" style="left:1194px;top:811px">r-shadow</div>
<div class="cr" style="left:1257px;top:811px">div.el-card__body</div>
<div class="cr" style="left:1363px;top:811px">div.block</div>
<div class="cr" style="left:1424px;top:811px">div.markdown-body</div>
<div class="cr" style="left:1544px;top:811px">div</div>
<div class="cr" style="left:1574px;top:811px">div</div>
<div class="cr" style="left:1603px;top:811px">h3#前言</div>

<!-- drawer -->
<div class="x" style="left:1170px;top:830px;width:517px;height:27px;background:#292a2d;border-bottom:1px solid #494c50"></div>
<svg class="x" style="left:1184px;top:837px" width="4" height="14" fill="#9aa0a6"><circle cx="2" cy="2" r="1.500"/><circle cx="2" cy="7" r="1.500"/><circle cx="2" cy="12" r="1.500"/></svg>
<div class="x" style="left:1198px;top:831px;width:94px;height:26px;background:#000"></div>
<div class="dt" style="left:1208px;top:836px;color:#e8eaed">What's New</div>
<svg class="x" style="left:1279px;top:839px" width="8" height="8"><path d="M.5.500l7 7M7.500.500l-7 7" stroke="#9aa0a6"/></svg>
<div class="dt" style="left:1302px;top:836px">Console</div>
<div class="dt" style="left:1364px;top:836px">Issues</div>
<div class="dt" style="left:1427px;top:836px">Rendering</div>
<div class="x" style="left:1597px;top:845px;font-size:11.500px;line-height:16px;color:#a9abae">CSDN @yma16</div>
<div class="x" style="left:1186px;top:862px;font-size:13px;font-weight:700;line-height:16px;color:#e8eaed">Highlights from the Chrome 88 update</div>

<!-- annotation -->
<div class="big">标题内容作为<span>id</span></div>
</div></body></html>
